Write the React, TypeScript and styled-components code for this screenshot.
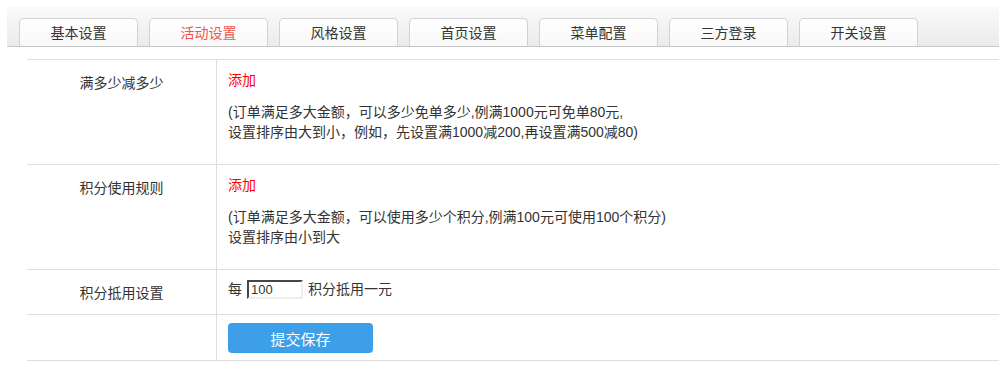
import React from "react";
import styled, { createGlobalStyle } from "styled-components";

const GlobalStyle = createGlobalStyle`
  html, body { margin: 0; padding: 0; background: #fff; }
  body {
    font-family: "Liberation Sans", "Noto Sans CJK SC", sans-serif;
    font-size: 14px;
    color: #333;
  }
`;

const Page = styled.div`
  padding: 7px 0 0 7px;
`;

const TabBar = styled.div`
  display: flex;
  align-items: flex-end;
  gap: 11px;
  height: 39px;
  padding-left: 12px;
  background: linear-gradient(#fafafa, #ebebeb);
  border-bottom: 1px solid #c6c6c6;
`;

const Tab = styled.div<{ $active?: boolean }>`
  box-sizing: border-box;
  width: 119px;
  height: 28px;
  border: 1px solid #d2d2d2;
  border-bottom: none;
  border-radius: 5px 5px 0 0;
  background: linear-gradient(#ffffff, #f8f8f8);
  display: flex;
  align-items: center;
  justify-content: center;
  font-size: 14px;
  line-height: 20px;
  padding-top: 1px;
  color: ${(p) => (p.$active ? "#f0554b" : "#333")};
`;

const Table = styled.div`
  margin: 12px 0 0 20px;
  border-top: 1px solid #dedede;
`;

const Row = styled.div`
  display: grid;
  grid-template-columns: 190px 1fr;
  border-bottom: 1px solid #dedede;
`;

const Label = styled.div`
  border-right: 1px solid #dedede;
  text-align: center;
  line-height: 20px;
  padding-top: 13px;
`;

const Cell = styled.div<{ $pt: number; $pb: number }>`
  padding: ${(p) => p.$pt}px 11px ${(p) => p.$pb}px 11px;
  line-height: 20px;
`;

const AddLink = styled.a`
  color: #ff0000;
  text-decoration: none;
  cursor: pointer;
  display: block;
`;

const Note = styled.div`
  margin-top: 12px;
  color: #333;
`;

const InlineLine = styled.div`
  display: flex;
  align-items: center;
  gap: 5px;
`;

const NumInput = styled.input`
  box-sizing: border-box;
  width: 56px;
  height: 19px;
  border: 2px inset #eee;
  border-top-color: #9a9a9a;
  border-left-color: #9a9a9a;
  border-right-color: #eee;
  border-bottom-color: #eee;
  padding: 0 2px;
  font-family: "Liberation Sans", sans-serif;
  font-size: 13px;
  color: #333;
  outline: none;
`;

const SaveButton = styled.button`
  width: 145px;
  height: 30px;
  border: none;
  border-radius: 4px;
  background: #3d9fe8;
  color: #fff;
  font-family: "Liberation Sans", "Noto Sans CJK SC", sans-serif;
  font-size: 15px;
  cursor: pointer;
  display: block;
`;

const tabs = ["基本设置", "活动设置", "风格设置", "首页设置", "菜单配置", "三方登录", "开关设置"];

export default function App() {
  return (
    <>
      <GlobalStyle />
      <Page>
        <TabBar>
          {tabs.map((t, i) => (
            <Tab key={t} $active={i === 1}>
              {t}
            </Tab>
          ))}
        </TabBar>
        <Table>
          <Row>
            <Label>满多少减多少</Label>
            <Cell $pt={10} $pb={22}>
              <AddLink>添加</AddLink>
              <Note>
                (订单满足多大金额，可以多少免单多少,例满1000元可免单80元,
                <br />
                设置排序由大到小，例如，先设置满1000减200,再设置满500减80)
              </Note>
            </Cell>
          </Row>
          <Row>
            <Label>积分使用规则</Label>
            <Cell $pt={10} $pb={22}>
              <AddLink>添加</AddLink>
              <Note>
                (订单满足多大金额，可以使用多少个积分,例满100元可使用100个积分)
                <br />
                设置排序由小到大
              </Note>
            </Cell>
          </Row>
          <Row>
            <Label>积分抵用设置</Label>
            <Cell $pt={9} $pb={15}>
              <InlineLine>
                <span>每</span>
                <NumInput defaultValue="100" />
                <span>积分抵用一元</span>
              </InlineLine>
            </Cell>
          </Row>
          <Row>
            <Label />
            <Cell $pt={8} $pb={7}>
              <SaveButton>提交保存</SaveButton>
            </Cell>
          </Row>
        </Table>
      </Page>
    </>
  );
}
